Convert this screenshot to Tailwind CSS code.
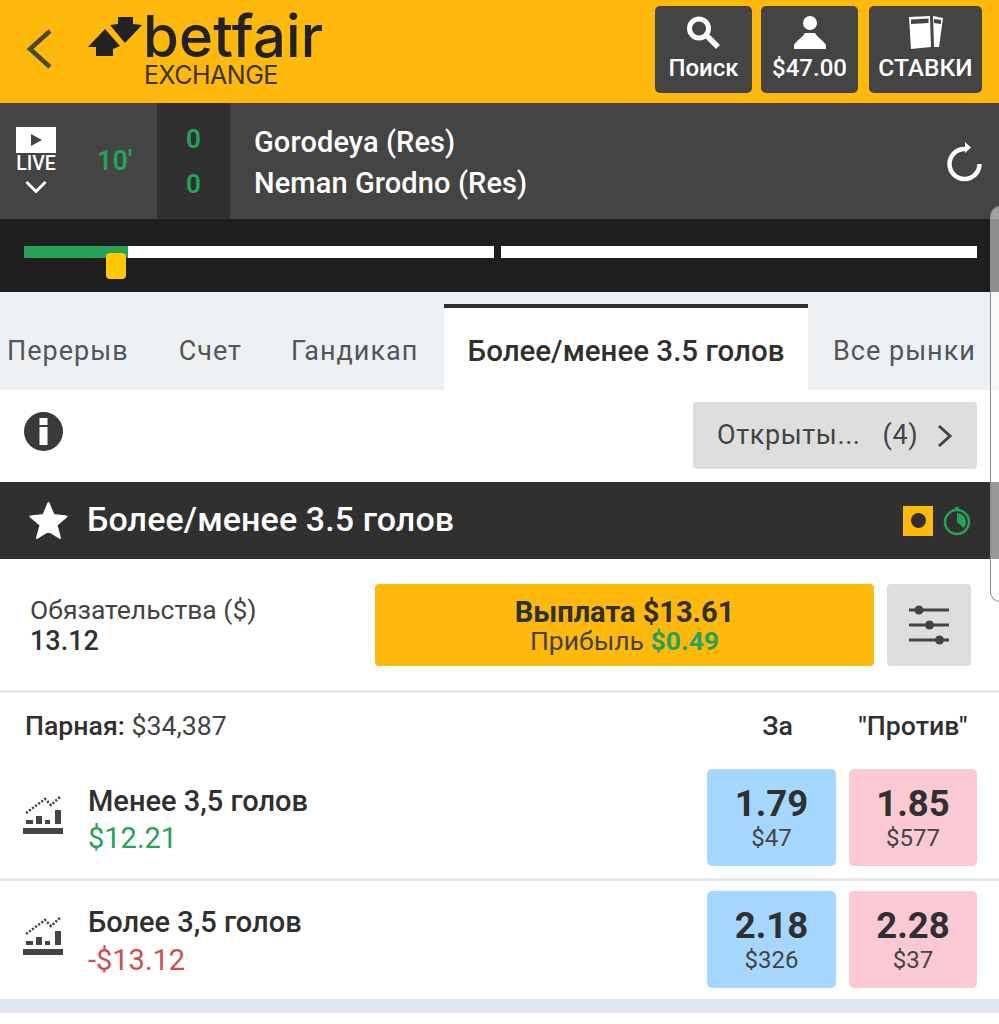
<!DOCTYPE html>
<html lang="ru">
<head>
  <meta charset="UTF-8" />
  <title>Betfair Exchange</title>
  <script src="https://cdn.jsdelivr.net/npm/@tailwindcss/browser@4"></script>
</head>
<body class="bg-white font-['Roboto',sans-serif] text-[#303030] w-[999px] h-[1024px] overflow-hidden relative">

  <!-- header -->
  <header class="h-[103px] bg-[#ffb80c] flex items-start">
    <svg class="w-[28px] h-[42px] ml-[26px] mt-[28px]" viewBox="0 0 28 42" fill="none"><path d="M24 3 L4 21 L24 39" stroke="#4a4a3a" stroke-width="4.5"/></svg>
    <svg class="w-[56px] h-[42px] ml-[34px] mt-[15px] shrink-0" viewBox="0 0 56 42" fill="#222"><path d="M17 14 L0 32 L8 32 L8 41 L25 41 L25 34 L32 31 Z"/><path d="M30 2 L45 2 L45 9 L54 10 L37 28 L22 10 L30 9 Z"/></svg>
    <div class="-ml-[1px] mt-[12px] w-[180px] shrink-0">
      <div class="font-['Inter',sans-serif] text-[58px] leading-[48px] tracking-[0.2px] text-[#222] font-medium">betfair</div>
      <div class="font-['Inter',sans-serif] text-[25px] leading-[24px] tracking-[-0.5px] text-[#3a3420] mt-[3px] ml-[1px]">EXCHANGE</div>
    </div>
    <div class="ml-auto mr-[17px] mt-[6px] flex text-white font-medium text-[24px]">
      <div class="w-[97px] h-[87px] bg-[#444] rounded-[5px] flex flex-col items-center">
        <svg class="w-[36px] h-[36px] mt-[9px]" viewBox="0 0 36 36" fill="none" stroke="#fff"><circle cx="13" cy="13.500" r="9.500" stroke-width="5"/><path d="M20 20 L32 32" stroke-width="5.500"/></svg>
        <span class="leading-[28px] mt-[3px]">Поиск</span>
      </div>
      <div class="w-[97px] h-[87px] bg-[#444] rounded-[5px] ml-[9px] flex flex-col items-center">
        <svg class="w-[36px] h-[36px] mt-[9px]" viewBox="0 0 36 36" fill="#fff"><circle cx="18" cy="8" r="7"/><path d="M2 34 L2 30 C5 25 10 23 13 18 L23 18 C26 23 31 25 34 30 L34 34 Z"/></svg>
        <span class="leading-[28px] mt-[3px]">$47.00</span>
      </div>
      <div class="w-[113px] h-[87px] bg-[#444] rounded-[5px] ml-[11px] flex flex-col items-center">
        <svg class="w-[36px] h-[36px] mt-[9px]" viewBox="0 0 36 36"><path d="M1 2 L22 1 L23 32 L3 34 Z" fill="#fff"/><path d="M3 4.500 L20.500 3.500 L20.500 8 L3 9 Z" fill="#444"/><path d="M25 1 L35 3 L31 32 L26 32 Z" fill="#fff"/><path d="M26 4 L33 5 L33 9 L26 8 Z" fill="#444"/></svg>
        <span class="leading-[28px] mt-[3px] text-[24.500px]">СТАВКИ</span>
      </div>
    </div>
  </header>

  <!-- score bar -->
  <section class="h-[116px] bg-[#444] flex items-stretch">
    <div class="w-[157px] flex shrink-0">
      <div class="w-[72px] flex flex-col items-center pt-[24px]">
        <div class="w-[40px] h-[26px] bg-white flex items-center justify-center">
          <svg class="w-[13px] h-[14px]" viewBox="0 0 13 14" fill="#444"><path d="M1 1 L12 7 L1 13 Z"/></svg>
        </div>
        <span class="text-white text-[19.500px] font-medium leading-[20px] mt-[1px]">LIVE</span>
        <svg class="w-[22px] h-[14px] mt-[6px]" viewBox="0 0 22 14" fill="none" stroke="#fff" stroke-width="3"><path d="M1.500 2 L11 11.500 L20.500 2"/></svg>
      </div>
      <div class="text-[#26a259] text-[27px] font-semibold pt-[39px] leading-[38px] ml-[25px]">10'</div>
    </div>
    <div class="w-[73px] bg-[#303030] shrink-0 flex flex-col items-center text-[#26a259] text-[26px] font-semibold leading-[30px] pt-[21px] gap-[15px]">
      <span>0</span>
      <span>0</span>
    </div>
    <div class="flex-1 pl-[24px] pt-[19px] text-white text-[29px] font-medium leading-[41px] tracking-[0.1px]">
      <div>Gorodeya (Res)</div>
      <div>Neman Grodno (Res)</div>
    </div>
    <svg class="w-[40px] h-[44px] mr-[14px] mt-[37px]" viewBox="0 0 40 44" fill="none"><path d="M34.500 24 A15 15 0 1 1 19.500 9 H21" stroke="#fff" stroke-width="4.500"/><path d="M20 2 L26 7.500 L20 13 Z" fill="#fff"/></svg>
  </section>

  <!-- timeline -->
  <section class="h-[73px] bg-[#1e1e1e] relative pl-[24px] pr-[22px] pt-[27px] flex gap-[7px]">
    <div class="w-[470px] h-[12px] bg-white"><div class="w-[104px] h-full bg-[#26a259]"></div></div>
    <div class="w-[476px] h-[12px] bg-white"></div>
    <div class="absolute left-[106px] top-[34px] w-[20px] h-[26px] rounded-[4px] bg-[#fcc800]"></div>
  </section>

  <!-- tabs -->
  <nav class="h-[98px] bg-[#eef1f4] pt-[12px] flex text-[27px] text-[#555] tracking-[1px]">
    <div class="w-[444px] flex items-center pt-[8px] whitespace-nowrap">
      <span class="ml-[7px]">Перерыв</span>
      <span class="ml-[50px]">Счет</span>
      <span class="ml-[49px]">Гандикап</span>
    </div>
    <div class="w-[364px] bg-white border-t-[4px] border-[#303030] flex items-center justify-center pt-[4px] text-[29.500px] font-medium text-[#303030] tracking-normal whitespace-nowrap">Более/менее 3.5 голов</div>
    <div class="flex-1 flex items-center pt-[8px] pl-[25px] whitespace-nowrap">Все рынки</div>
  </nav>

  <!-- info row -->
  <section class="h-[92px] flex items-start justify-between pl-[24px] pr-[22px] pt-[12px]">
    <svg class="w-[39px] h-[39px] mt-[10px]" viewBox="0 0 39 39"><circle cx="19.500" cy="19.500" r="19.500" fill="#3a3a3a"/><rect x="15.500" y="6" width="8" height="7" fill="#fff"/><rect x="15.500" y="15" width="8" height="18" fill="#fff"/></svg>
    <div class="w-[284px] h-[67px] bg-[#dedede] rounded-[4px] flex items-center pl-[24px] text-[27px] text-[#444] tracking-[0.6px]">
      <span>Открыты...</span>
      <span class="ml-[22px]">(4)</span>
      <svg class="w-[16px] h-[24px] ml-[19px]" viewBox="0 0 16 24" fill="none" stroke="#444" stroke-width="3"><path d="M2 2 L13 12 L2 22"/></svg>
    </div>
  </section>

  <!-- market title -->
  <section class="h-[77px] bg-[#303030] flex items-center pl-[29px] pr-[28px]">
    <svg class="w-[40px] h-[40px] shrink-0" viewBox="0 0 40 40" fill="#fff" stroke="#fff" stroke-width="2" stroke-linejoin="round"><path d="M19.500 2 L24.500 14 L37.500 15.500 L27.500 24 L31 37 L19.500 30 L8 37 L11.500 24 L1.500 15.500 L14.500 14 Z"/></svg>
    <span class="text-white text-[34px] font-medium ml-[18px] pb-[2px] tracking-[0.1px]">Более/менее 3.5 голов</span>
    <div class="ml-auto flex items-center gap-[10px]">
      <div class="w-[30px] h-[30px] bg-[#ffb80c] flex items-center justify-center"><div class="w-[15px] h-[15px] rounded-full bg-[#303030]"></div></div>
      <svg class="w-[28px] h-[30px]" viewBox="0 0 28 30" fill="none"><circle cx="14" cy="16" r="12" stroke="#26a259" stroke-width="2.500"/><path d="M12 1 H16 V4 H12 Z" fill="#26a259"/><path d="M14 7 A9 9 0 0 1 20.500 22 L14 16 Z" fill="#26a259"/></svg>
    </div>
  </section>

  <!-- exposure -->
  <section class="h-[134px] border-b-[3px] border-[#e4e8ec] flex items-start pt-[25px]">
    <div class="w-[375px] pl-[30px] pt-[10px] shrink-0">
      <div class="text-[26.500px] leading-[32px] text-[#444]">Обязательства ($)</div>
      <div class="text-[27px] leading-[30px] font-medium">13.12</div>
    </div>
    <div class="w-[499px] h-[82px] bg-[#ffb80c] rounded-[4px] flex flex-col items-center pt-[13px]">
      <div class="text-[29px] leading-[30px] font-bold text-[#303030]">Выплата $13.61</div>
      <div class="text-[26.500px] leading-[28px] text-[#444]">Прибыль <span class="font-bold text-[#26a259]">$0.49</span></div>
    </div>
    <div class="w-[84px] h-[82px] bg-[#dedede] rounded-[4px] ml-[13px] flex items-center justify-center">
      <svg class="w-[40px] h-[40px]" viewBox="0 0 40 40" fill="#444"><rect y="3.500" width="40" height="3"/><circle cx="10" cy="5" r="4.500"/><rect y="18.500" width="40" height="3"/><circle cx="20.500" cy="20" r="4.500"/><rect y="33.500" width="40" height="3"/><circle cx="30.500" cy="35" r="4.500"/></svg>
    </div>
  </section>

  <!-- column heads -->
  <section class="h-[72px] flex items-start pt-[16px] text-[26.700px] leading-[34px] pl-[25px]">
    <div><span class="font-medium">Парная:</span> <span class="text-[#444]">$34,387</span></div>
    <div class="ml-auto w-[129px] pl-[12px] text-center font-medium">За</div>
    <div class="w-[128px] ml-[13px] mr-[22px] text-center font-medium whitespace-nowrap">"Против"</div>
  </section>

  <!-- runner rows -->
  <section class="h-[116px] border-b-[3px] border-[#e4e8ec] flex items-start pt-[4px]">
    <svg class="w-[40px] h-[39px] ml-[23px] mt-[26px] shrink-0" viewBox="0 0 40 39" fill="#444"><path d="M3 18 L22 4 L28 10 L38 1" fill="none" stroke="#444" stroke-width="2.500" stroke-dasharray="2.200 1.600"/><rect x="3" y="25" width="7" height="4"/><rect x="13" y="21" width="6" height="8"/><rect x="22" y="25" width="5" height="4"/><rect x="32" y="15" width="6" height="14"/><rect y="33" width="40" height="6"/></svg>
    <div class="ml-[25px] pt-[16px] flex-1">
      <div class="text-[29px] leading-[32px] font-medium">Менее 3,5 голов</div>
      <div class="text-[29px] leading-[42px] text-[#26a259]">$12.21</div>
    </div>
    <div class="w-[129px] h-[97px] bg-[#a6d8ff] rounded-[5px] flex flex-col items-center pt-[14px]">
      <div class="text-[36.500px] leading-[42px] font-bold">1.79</div>
      <div class="text-[24px] leading-[26px] text-[#444]">$47</div>
    </div>
    <div class="w-[128px] h-[97px] bg-[#fac9d4] rounded-[5px] ml-[13px] mr-[22px] flex flex-col items-center pt-[14px]">
      <div class="text-[36.500px] leading-[42px] font-bold">1.85</div>
      <div class="text-[24px] leading-[26px] text-[#444]">$577</div>
    </div>
  </section>
  <section class="h-[118px] flex items-start pt-[10px]">
    <svg class="w-[40px] h-[39px] ml-[23px] mt-[25px] shrink-0" viewBox="0 0 40 39" fill="#444"><path d="M3 18 L22 4 L28 10 L38 1" fill="none" stroke="#444" stroke-width="2.500" stroke-dasharray="2.200 1.600"/><rect x="3" y="25" width="7" height="4"/><rect x="13" y="21" width="6" height="8"/><rect x="22" y="25" width="5" height="4"/><rect x="32" y="15" width="6" height="14"/><rect y="33" width="40" height="6"/></svg>
    <div class="ml-[25px] pt-[15px] flex-1">
      <div class="text-[29px] leading-[32px] font-medium">Более 3,5 голов</div>
      <div class="text-[29px] leading-[42px] mt-[1px] text-[#c9514f]">-$13.12</div>
    </div>
    <div class="w-[129px] h-[97px] bg-[#a6d8ff] rounded-[5px] flex flex-col items-center pt-[14px]">
      <div class="text-[36.500px] leading-[42px] font-bold">2.18</div>
      <div class="text-[24px] leading-[26px] text-[#444]">$326</div>
    </div>
    <div class="w-[128px] h-[97px] bg-[#fac9d4] rounded-[5px] ml-[13px] mr-[22px] flex flex-col items-center pt-[14px]">
      <div class="text-[36.500px] leading-[42px] font-bold">2.28</div>
      <div class="text-[24px] leading-[26px] text-[#444]">$37</div>
    </div>
  </section>
  <div class="h-[14px] bg-[#e0e6eb]"></div>

  <!-- scroll handle overlay -->
  <div class="absolute left-[990px] top-[206px] w-[20px] h-[396px] rounded-[10px] border border-[#8a8a8a] bg-white/50"></div>
</body>
</html>
